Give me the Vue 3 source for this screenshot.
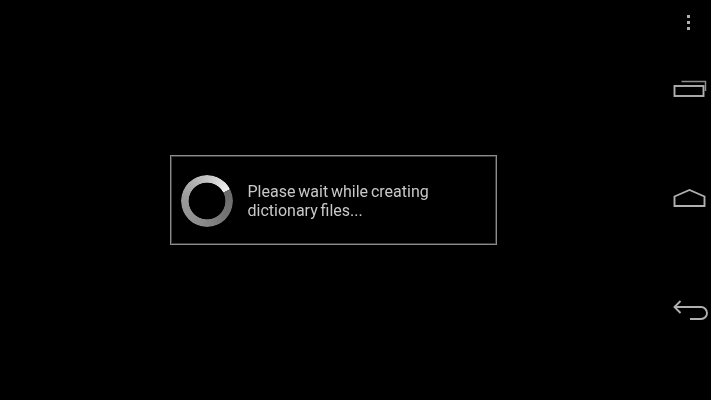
<script setup>
</script>

<template>
  <div class="screen">
    <main class="stage">
      <div class="dialog">
        <div class="spinner"></div>
        <p class="message">Please wait while creating dictionary files...</p>
      </div>
    </main>
    <nav class="rail">
      <div class="menu"><i></i><i></i><i></i></div>
      <div class="keys">
        <svg class="key" viewBox="0 0 38 24" width="38" height="24">
          <path class="dim" d="M11.5 5.5H35.5V15" />
          <rect x="4.5" y="10" width="29" height="10" />
        </svg>
        <svg class="key" viewBox="0 0 38 24" width="38" height="24">
          <path d="M4.5 19V9.5L19.5 3L34.5 9.5V19Z" />
        </svg>
        <svg class="key" viewBox="0 0 38 24" width="38" height="24">
          <path d="M10.5 3L4.5 9L10.5 15" />
          <path d="M5 9H31A6 6 0 0 1 31 21H20" />
        </svg>
      </div>
    </nav>
  </div>
</template>

<style>
html, body { margin: 0; background: #000; }
</style>

<style scoped>
.screen { width: 711px; height: 400px; display: flex; background: #000; overflow: hidden; }
.stage { flex: 1; display: flex; align-items: center; justify-content: center; }
.dialog {
  width: 327px; height: 90px; box-sizing: border-box;
  border: 1px solid #8c8c8c;
  box-shadow: inset 0 0 0 1px #3a3a3a;
  display: flex; align-items: center; gap: 15px;
  padding: 0 10px;
  filter: blur(0.35px);
}
.spinner {
  width: 52px; height: 52px; border-radius: 50%; flex: none; margin-top: 1px;
  background: conic-gradient(from 62deg, #6a6a6a, #747474 70deg, #8c8c8c 130deg, #9c9c9c 220deg, #c4c4c4 298deg, #f0f0f0 360deg);
  -webkit-mask: radial-gradient(circle, transparent 18px, #000 18.7px);
  mask: radial-gradient(circle, transparent 18px, #000 18.7px);
}
.message {
  margin: 1px 0 0; width: 200px;
  font: 16px/19px Roboto, sans-serif; color: #c8c8c8;
  word-spacing: -1.1px;
}
.rail { width: 45px; flex: none; display: flex; flex-direction: column; align-items: center; }
.menu { height: 44px; display: flex; flex-direction: column; justify-content: center; gap: 3px; }
.menu i { display: block; width: 3px; height: 3px; background: #b0b0b0; }
.keys { margin-top: 32px; display: flex; flex-direction: column; gap: 87px; }
.key { display: block; fill: none; stroke: #b0b0b0; stroke-width: 1.9; filter: blur(0.3px); }
.key .dim { stroke: #8c8c8c; stroke-width: 1.5; }
</style>
